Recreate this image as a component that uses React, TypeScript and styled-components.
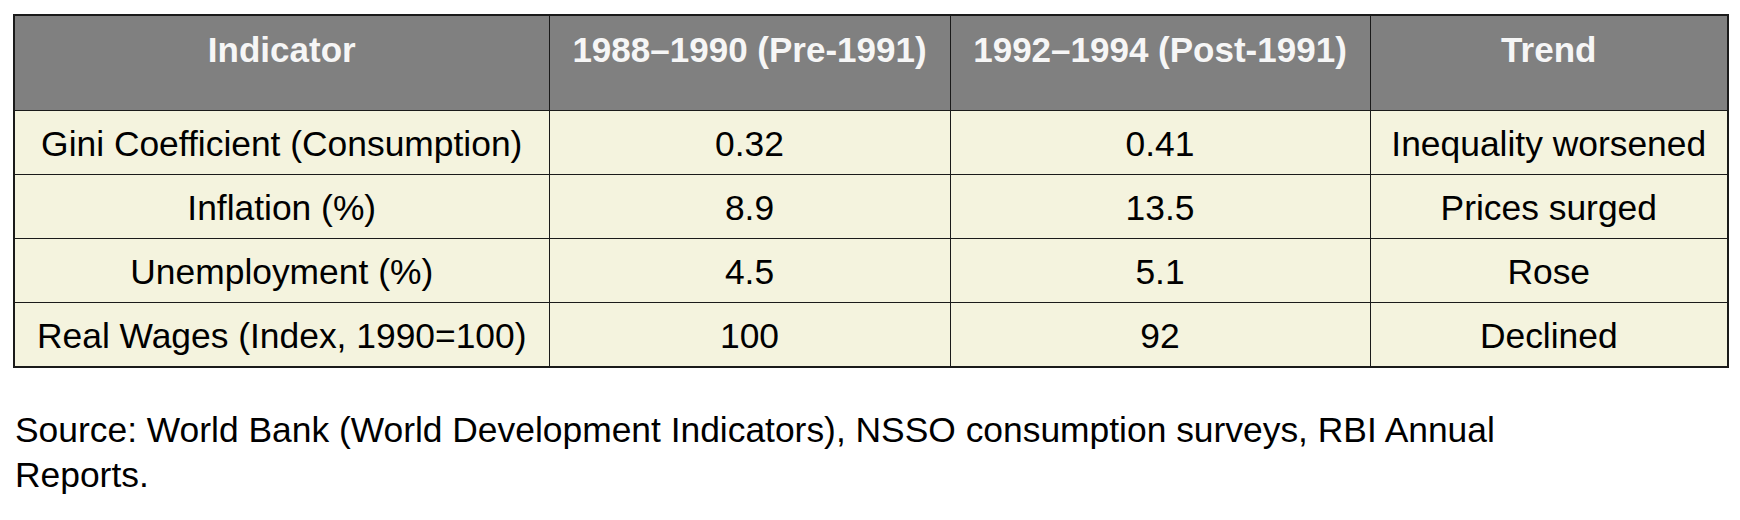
import React from "react";
import styled, { createGlobalStyle } from "styled-components";

const GlobalStyle = createGlobalStyle`
  html, body {
    margin: 0;
    padding: 0;
    background: #ffffff;
  }
  body {
    font-family: "Liberation Sans", Arial, Helvetica, sans-serif;
    color: #000000;
  }
`;

type Row = {
  indicator: string;
  pre: string;
  post: string;
  trend: string;
};

const columns = [
  { title: "Indicator", width: 535 },
  { title: "1988–1990 (Pre-1991)", width: 401 },
  { title: "1992–1994 (Post-1991)", width: 420 },
  { title: "Trend", width: 358 },
];

const rows: Row[] = [
  {
    indicator: "Gini Coefficient (Consumption)",
    pre: "0.32",
    post: "0.41",
    trend: "Inequality worsened",
  },
  { indicator: "Inflation (%)", pre: "8.9", post: "13.5", trend: "Prices surged" },
  { indicator: "Unemployment (%)", pre: "4.5", post: "5.1", trend: "Rose" },
  {
    indicator: "Real Wages (Index, 1990=100)",
    pre: "100",
    post: "92",
    trend: "Declined",
  },
];

const App: React.FC = () => {
  return (
    <>
      <GlobalStyle />
      <Page>
        <DataTable>
          <colgroup>
            {columns.map((c) => (
              <col key={c.title} style={{ width: c.width }} />
            ))}
          </colgroup>
          <thead>
            <tr>
              {columns.map((c) => (
                <HeadCell key={c.title}>{c.title}</HeadCell>
              ))}
            </tr>
          </thead>
          <tbody>
            {rows.map((r) => (
              <tr key={r.indicator}>
                <Cell>{r.indicator}</Cell>
                <Cell>{r.pre}</Cell>
                <Cell>{r.post}</Cell>
                <Cell>{r.trend}</Cell>
              </tr>
            ))}
          </tbody>
        </DataTable>
        <SourceNote>
          Source: World Bank (World Development Indicators), NSSO consumption
          surveys, RBI Annual Reports.
        </SourceNote>
      </Page>
    </>
  );
};

const Page = styled.div`
  padding: 14px 13px 0 13px;
`;

const DataTable = styled.table`
  width: 1714px;
  table-layout: fixed;
  border-collapse: collapse;
  border: 2px solid #1a1a1a;
`;

const HeadCell = styled.th`
  background-color: #808080;
  color: #f6f6f6;
  font-size: 35px;
  font-weight: 700;
  line-height: 42px;
  text-align: center;
  vertical-align: top;
  padding: 13px 6px 39px;
  border: 1px solid #1a1a1a;
  white-space: nowrap;
`;

const Cell = styled.td`
  background-color: #f4f3de;
  font-size: 35.4px;
  line-height: 41px;
  text-align: center;
  vertical-align: middle;
  padding: 13px 6px 9px;
  border: 1px solid #1a1a1a;
  white-space: nowrap;
`;

const SourceNote = styled.p`
  margin: 40px 0 0 2px;
  max-width: 1560px;
  font-size: 35.4px;
  line-height: 45px;
`;

export default App;
